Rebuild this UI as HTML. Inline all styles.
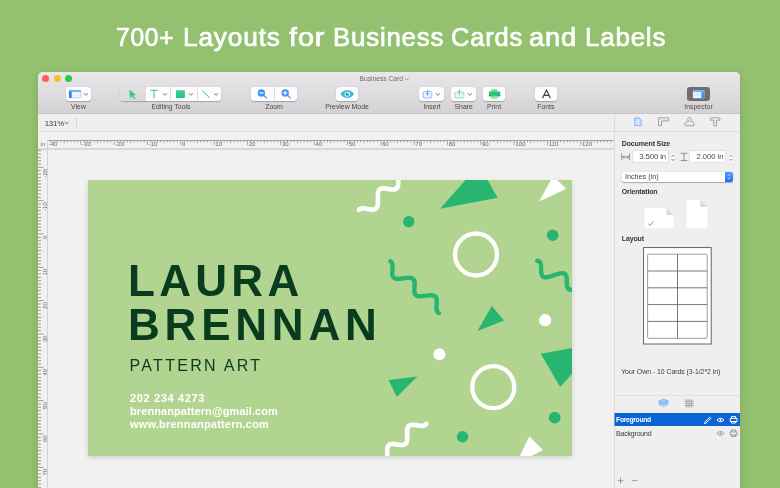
<!DOCTYPE html>
<html><head><meta charset="utf-8">
<style>
*{margin:0;padding:0;box-sizing:border-box}
html,body{width:780px;height:488px;overflow:hidden}
#win,#title{will-change:transform}
body{background:#93c16f;font-family:"Liberation Sans",sans-serif;position:relative}
.a{position:absolute}
#title{left:0;top:21.7px;width:780px;height:30px;color:#fff;font-size:25px;font-weight:normal;-webkit-text-stroke:0.7px #fff;letter-spacing:0.8px;line-height:30px}
.tw{position:absolute;top:0;white-space:nowrap;transform-origin:0 0}
#win{left:38px;top:72px;width:702px;height:430px;background:#f1f1f1;border-radius:5px 5px 0 0;overflow:hidden;box-shadow:0 0 0.5px rgba(0,0,0,0.3),0 2px 10px rgba(0,0,0,0.13)}
#tb{left:0;top:0;width:702px;height:42px;background:linear-gradient(#e9e7e9,#d4d2d4);border-bottom:1px solid #c8c6c8}
.lab{font-size:6.9px;color:#4a4a4a;text-align:center;white-space:nowrap}
.btn{background:#fdfdfd;border-radius:3px;box-shadow:0 0.5px 1px rgba(0,0,0,0.25)}
.ib{font-size:7px;font-weight:bold;color:#333;white-space:nowrap;letter-spacing:-0.15px}
.fld{height:10.9px;background:#fff;box-shadow:0 0 0 0.5px #d6d6d6;font-size:7.8px;color:#4a4a4a;text-align:right;padding-right:2px;line-height:12.8px;letter-spacing:-0.1px}
.tl{width:7px;height:7px;border-radius:50%}
</style></head><body>
<div id="title" class="a"><span class="tw" style="left:116.0px;transform:scaleX(0.980)">700+</span><span class="tw" style="left:183.3px;transform:scaleX(1.049)">Layouts</span><span class="tw" style="left:288.5px;transform:scaleX(1.149)">for</span><span class="tw" style="left:333.2px;transform:scaleX(1.031)">Business</span><span class="tw" style="left:450.9px;transform:scaleX(1.018)">Cards</span><span class="tw" style="left:529.0px;transform:scaleX(1.091)">and</span><span class="tw" style="left:584.8px;transform:scaleX(1.035)">Labels</span></div>
<div id="win" class="a">
  <div id="tb" class="a">
    <div class="a tl" style="left:4.1px;top:3.2px;background:#fc5b57"></div>
    <div class="a tl" style="left:15.5px;top:3.2px;background:#fdbc2e"></div>
    <div class="a tl" style="left:27px;top:3.2px;background:#29c940"></div>
    <div class="a lab" style="left:321.5px;top:3.2px;color:#6a6a6a;font-size:6.7px;text-align:left">Business Card</div><svg class="a" style="left:366px;top:4px" width="6" height="6" viewBox="0 0 6 6"><path d="M0.9,2 L3,3.9 L5.1,2" fill="none" stroke="#8a8a8a" stroke-width="0.7"/></svg>
    <!-- View -->
    <div class="a btn" style="left:28px;top:15px;width:25px;height:14px">
      <svg class="a" style="left:0;top:0" width="25" height="14" viewBox="0 0 25 14">
        <rect x="3.3" y="3.3" width="11.6" height="7.5" rx="1" fill="#eef5fe" stroke="#9cc6fa" stroke-width="0.7"/>
        <rect x="3" y="3" width="12.1" height="1.9" rx="0.8" fill="#79b3f7"/>
        <rect x="3" y="4.6" width="2.7" height="6.3" rx="0.6" fill="#2a87f4"/>
        <path d="M17.8,6.3 L19.9,8.2 L22,6.3" fill="none" stroke="#606060" stroke-width="0.85"/>
      </svg>
    </div>
    <div class="a lab" style="left:20px;top:31px;width:41px">View</div>
    <!-- Editing tools -->
    <div class="a btn" style="left:82px;top:15px;width:101px;height:14px">
      <div class="a" style="left:0;top:0;width:25px;height:14px;background:linear-gradient(#e3e2e3,#dbdadb);border-radius:3px 0 0 3px"></div>
      <div class="a" style="left:25px;top:0;width:0.5px;height:14px;background:#dcdcdc"></div>
      <div class="a" style="left:50.3px;top:0;width:0.5px;height:14px;background:#dcdcdc"></div>
      <div class="a" style="left:76.5px;top:0;width:0.5px;height:14px;background:#dcdcdc"></div>
      <svg class="a" style="left:0;top:0" width="101" height="14" viewBox="0 0 101 14">
        <path d="M9.3,2.8 L16,8.1 L13.2,8.5 L15.5,11.4 L14.2,12.3 L12,9.3 L10.1,11.4 Z" fill="#33c77f"/>
        <path d="M30.3,3.2 H37.7 M34,3.2 V11.3" fill="none" stroke="#33c97f" stroke-width="1.05"/>
        <path d="M42.8,6.3 L44.9,8.2 L47,6.3" fill="none" stroke="#606060" stroke-width="0.85"/>
        <defs><linearGradient id="sq" x1="0" y1="0" x2="0" y2="1"><stop offset="0" stop-color="#45d083"/><stop offset="1" stop-color="#1fbf96"/></linearGradient></defs><rect x="56" y="3.3" width="8.9" height="7.7" rx="0.5" fill="url(#sq)"/>
        <path d="M68.8,6.3 L70.9,8.2 L73,6.3" fill="none" stroke="#606060" stroke-width="0.85"/>
        <path d="M82.3,3.6 L89.5,10.8" fill="none" stroke="#2cc17c" stroke-width="1"/>
        <path d="M94,6.3 L96.1,8.2 L98.2,6.3" fill="none" stroke="#606060" stroke-width="0.85"/>
      </svg>
    </div>
    <div class="a lab" style="left:93px;top:31px;width:80px">Editing Tools</div>
    <!-- Zoom -->
    <div class="a btn" style="left:212.8px;top:15px;width:46.2px;height:14px">
      <div class="a" style="left:23.4px;top:0;width:0.5px;height:14px;background:#dcdcdc"></div>
      <svg class="a" style="left:0;top:0" width="46" height="14" viewBox="0 0 46 14">
        <circle cx="10.4" cy="5.9" r="3.7" fill="#3b93f6"/>
        <path d="M8.4,5.9 H12.4" stroke="#fff" stroke-width="1.1"/>
        <path d="M13,8.5 L15.6,11.1" stroke="#3b93f6" stroke-width="1.1" stroke-linecap="round"/>
        <circle cx="34.2" cy="5.9" r="3.7" fill="#3b93f6"/>
        <path d="M32.2,5.9 H36.2 M34.2,3.9 V7.9" stroke="#fff" stroke-width="1.1"/>
        <path d="M36.8,8.5 L39.4,11.1" stroke="#3b93f6" stroke-width="1.1" stroke-linecap="round"/>
      </svg>
    </div>
    <div class="a lab" style="left:206px;top:31px;width:60px">Zoom</div>
    <!-- Preview -->
    <div class="a btn" style="left:297.8px;top:15px;width:22.5px;height:14px">
      <svg class="a" style="left:0;top:0" width="23" height="14" viewBox="0 0 23 14">
        <path d="M4.6,7.1 C7.5,1.8 15,1.8 17.9,7.1 C15,12.4 7.5,12.4 4.6,7.1 Z" fill="#3cb5ee"/>
        <circle cx="11.25" cy="7.1" r="2.7" fill="#fff"/>
        <circle cx="11.25" cy="7.1" r="1.9" fill="#22b46c"/>
        <circle cx="12" cy="6.3" r="0.7" fill="#e8fff2"/>
      </svg>
    </div>
    <div class="a lab" style="left:279px;top:31px;width:60px">Preview Mode</div>
    <!-- Insert -->
    <div class="a btn" style="left:381.2px;top:15px;width:25.3px;height:14px">
      <svg class="a" style="left:0;top:0" width="26" height="14" viewBox="0 0 26 14">
        <rect x="4.3" y="4.6" width="8.5" height="6.4" rx="1" fill="#eaf3fe" stroke="#6fb0f8" stroke-width="0.75"/>
        <path d="M8.55,2.8 V7" stroke="#3d93f5" stroke-width="0.7"/>
        <path d="M6.9,6.6 H10.2 L8.55,8.6 Z" fill="#3d93f5"/>
        <path d="M16.6,6.3 L18.7,8.2 L20.8,6.3" fill="none" stroke="#606060" stroke-width="0.85"/>
      </svg>
    </div>
    <div class="a lab" style="left:364px;top:31px;width:60px">Insert</div>
    <!-- Share -->
    <div class="a btn" style="left:413px;top:15px;width:25px;height:14px">
      <svg class="a" style="left:0;top:0" width="25" height="14" viewBox="0 0 25 14">
        <rect x="3.9" y="5.3" width="9" height="5.8" rx="1.2" fill="#e6f8ed" stroke="#7ad6a2" stroke-width="0.75"/>
        <path d="M8.4,4.2 V8.3" stroke="#5ccb8c" stroke-width="0.7"/>
        <circle cx="8.4" cy="3.9" r="0.9" fill="#3fc27a"/>
        <path d="M16.6,6.3 L18.7,8.2 L20.8,6.3" fill="none" stroke="#606060" stroke-width="0.85"/>
      </svg>
    </div>
    <div class="a lab" style="left:395.7px;top:31px;width:60px">Share</div>
    <!-- Print -->
    <div class="a btn" style="left:444.8px;top:15px;width:22.2px;height:14px">
      <svg class="a" style="left:0;top:0" width="23" height="14" viewBox="0 0 23 14">
        <rect x="8.2" y="2.2" width="6.1" height="2.6" rx="0.5" fill="#6fe08f"/>
        <rect x="5.9" y="4.5" width="11.3" height="4.8" rx="1.1" fill="#2cc079"/>
        <rect x="5.9" y="8" width="11.3" height="1.3" fill="#1a9e74"/>
        <rect x="8.2" y="8.6" width="6.3" height="3.2" rx="0.4" fill="#7ee89b"/>
      </svg>
    </div>
    <div class="a lab" style="left:426px;top:31px;width:60px">Print</div>
    <!-- Fonts -->
    <div class="a btn" style="left:496.7px;top:15px;width:22.6px;height:14px">
      <svg class="a" style="left:0;top:0" width="23" height="14" viewBox="0 0 23 14">
        <path d="M7.5,11.3 L11.45,3 L15.4,11.3 M8.9,8.4 H14" fill="none" stroke="#3a3a3a" stroke-width="1.1"/>
      </svg>
    </div>
    <div class="a lab" style="left:477.8px;top:31px;width:60px">Fonts</div>
    <!-- Inspector -->
    <div class="a" style="left:648.7px;top:15px;width:23.4px;height:14.4px;background:#6e6e6e;border-radius:3px">
      <svg class="a" style="left:0;top:0" width="24" height="15" viewBox="0 0 24 15">
        <rect x="5.9" y="2.9" width="11.4" height="8.4" rx="1" fill="#eef5fe"/>
        <rect x="14.2" y="2.9" width="3.1" height="8.4" rx="0.6" fill="#3f95f6"/>
        <rect x="5.9" y="2.9" width="11.4" height="2" rx="0.8" fill="#72b2f8"/>
        <rect x="6.8" y="6" width="6.6" height="2.8" fill="#dde9f8"/>
      </svg>
    </div>
    <div class="a lab" style="left:630.5px;top:31px;width:60px">Inspector</div>
  </div>

  <!-- zoom bar -->
  <div class="a" style="left:0;top:42px;width:576px;height:17.5px;background:#efeff0;border-bottom:1px solid #dddddd"></div>
  <div class="a" style="left:6.7px;top:46.6px;font-size:7.8px;color:#3c3c3c;letter-spacing:-0.15px">131%</div><svg class="a" style="left:25.5px;top:49px" width="5" height="4" viewBox="0 0 5 4"><path d="M0.6,1 L2.5,2.8 L4.4,1" fill="none" stroke="#444" stroke-width="0.85"/></svg>
  <div class="a" style="left:38px;top:45.5px;width:0.8px;height:11px;background:#d9d9d9"></div>
  <!-- ruler -->
  <div class="a" style="left:0;top:76.1px;width:576px;height:1.6px;background:#d8d8d8"></div><div class="a" style="left:9.5px;top:67.8px;width:566.5px;height:0.8px;background:#a5a5a5"></div>
  <div class="a" style="left:9.2px;top:68px;width:0.8px;height:362px;background:#d3d3d3"></div>
  <div class="a" style="left:2.6px;top:69.3px;font-size:6px;color:#777">in</div>
  <svg class="a" style="left:0;top:68px" width="576" height="9" viewBox="0 0 576 9"><g fill="#8c8c8c"><rect x="12.46" y="0" width="0.7" height="2.4"/><rect x="15.80" y="0" width="0.7" height="2.4"/><rect x="19.13" y="0" width="0.7" height="2.4"/><rect x="22.46" y="0" width="0.7" height="2.4"/><rect x="25.80" y="0" width="0.7" height="3.2"/><rect x="29.13" y="0" width="0.7" height="2.4"/><rect x="32.46" y="0" width="0.7" height="2.4"/><rect x="35.79" y="0" width="0.7" height="2.4"/><rect x="39.13" y="0" width="0.7" height="2.4"/><rect x="42.46" y="0" width="0.7" height="5.0"/><rect x="45.79" y="0" width="0.7" height="2.4"/><rect x="49.13" y="0" width="0.7" height="2.4"/><rect x="52.46" y="0" width="0.7" height="2.4"/><rect x="55.79" y="0" width="0.7" height="2.4"/><rect x="59.13" y="0" width="0.7" height="3.2"/><rect x="62.46" y="0" width="0.7" height="2.4"/><rect x="65.79" y="0" width="0.7" height="2.4"/><rect x="69.12" y="0" width="0.7" height="2.4"/><rect x="72.46" y="0" width="0.7" height="2.4"/><rect x="75.79" y="0" width="0.7" height="5.0"/><rect x="79.12" y="0" width="0.7" height="2.4"/><rect x="82.46" y="0" width="0.7" height="2.4"/><rect x="85.79" y="0" width="0.7" height="2.4"/><rect x="89.12" y="0" width="0.7" height="2.4"/><rect x="92.46" y="0" width="0.7" height="3.2"/><rect x="95.79" y="0" width="0.7" height="2.4"/><rect x="99.12" y="0" width="0.7" height="2.4"/><rect x="102.45" y="0" width="0.7" height="2.4"/><rect x="105.79" y="0" width="0.7" height="2.4"/><rect x="109.12" y="0" width="0.7" height="5.0"/><rect x="112.45" y="0" width="0.7" height="2.4"/><rect x="115.79" y="0" width="0.7" height="2.4"/><rect x="119.12" y="0" width="0.7" height="2.4"/><rect x="122.45" y="0" width="0.7" height="2.4"/><rect x="125.79" y="0" width="0.7" height="3.2"/><rect x="129.12" y="0" width="0.7" height="2.4"/><rect x="132.45" y="0" width="0.7" height="2.4"/><rect x="135.78" y="0" width="0.7" height="2.4"/><rect x="139.12" y="0" width="0.7" height="2.4"/><rect x="142.45" y="0" width="0.7" height="5.0"/><rect x="145.78" y="0" width="0.7" height="2.4"/><rect x="149.12" y="0" width="0.7" height="2.4"/><rect x="152.45" y="0" width="0.7" height="2.4"/><rect x="155.78" y="0" width="0.7" height="2.4"/><rect x="159.12" y="0" width="0.7" height="3.2"/><rect x="162.45" y="0" width="0.7" height="2.4"/><rect x="165.78" y="0" width="0.7" height="2.4"/><rect x="169.11" y="0" width="0.7" height="2.4"/><rect x="172.45" y="0" width="0.7" height="2.4"/><rect x="175.78" y="0" width="0.7" height="5.0"/><rect x="179.11" y="0" width="0.7" height="2.4"/><rect x="182.45" y="0" width="0.7" height="2.4"/><rect x="185.78" y="0" width="0.7" height="2.4"/><rect x="189.11" y="0" width="0.7" height="2.4"/><rect x="192.45" y="0" width="0.7" height="3.2"/><rect x="195.78" y="0" width="0.7" height="2.4"/><rect x="199.11" y="0" width="0.7" height="2.4"/><rect x="202.44" y="0" width="0.7" height="2.4"/><rect x="205.78" y="0" width="0.7" height="2.4"/><rect x="209.11" y="0" width="0.7" height="5.0"/><rect x="212.44" y="0" width="0.7" height="2.4"/><rect x="215.78" y="0" width="0.7" height="2.4"/><rect x="219.11" y="0" width="0.7" height="2.4"/><rect x="222.44" y="0" width="0.7" height="2.4"/><rect x="225.78" y="0" width="0.7" height="3.2"/><rect x="229.11" y="0" width="0.7" height="2.4"/><rect x="232.44" y="0" width="0.7" height="2.4"/><rect x="235.77" y="0" width="0.7" height="2.4"/><rect x="239.11" y="0" width="0.7" height="2.4"/><rect x="242.44" y="0" width="0.7" height="5.0"/><rect x="245.77" y="0" width="0.7" height="2.4"/><rect x="249.11" y="0" width="0.7" height="2.4"/><rect x="252.44" y="0" width="0.7" height="2.4"/><rect x="255.77" y="0" width="0.7" height="2.4"/><rect x="259.11" y="0" width="0.7" height="3.2"/><rect x="262.44" y="0" width="0.7" height="2.4"/><rect x="265.77" y="0" width="0.7" height="2.4"/><rect x="269.10" y="0" width="0.7" height="2.4"/><rect x="272.44" y="0" width="0.7" height="2.4"/><rect x="275.77" y="0" width="0.7" height="5.0"/><rect x="279.10" y="0" width="0.7" height="2.4"/><rect x="282.44" y="0" width="0.7" height="2.4"/><rect x="285.77" y="0" width="0.7" height="2.4"/><rect x="289.10" y="0" width="0.7" height="2.4"/><rect x="292.44" y="0" width="0.7" height="3.2"/><rect x="295.77" y="0" width="0.7" height="2.4"/><rect x="299.10" y="0" width="0.7" height="2.4"/><rect x="302.43" y="0" width="0.7" height="2.4"/><rect x="305.77" y="0" width="0.7" height="2.4"/><rect x="309.10" y="0" width="0.7" height="5.0"/><rect x="312.43" y="0" width="0.7" height="2.4"/><rect x="315.77" y="0" width="0.7" height="2.4"/><rect x="319.10" y="0" width="0.7" height="2.4"/><rect x="322.43" y="0" width="0.7" height="2.4"/><rect x="325.76" y="0" width="0.7" height="3.2"/><rect x="329.10" y="0" width="0.7" height="2.4"/><rect x="332.43" y="0" width="0.7" height="2.4"/><rect x="335.76" y="0" width="0.7" height="2.4"/><rect x="339.10" y="0" width="0.7" height="2.4"/><rect x="342.43" y="0" width="0.7" height="5.0"/><rect x="345.76" y="0" width="0.7" height="2.4"/><rect x="349.10" y="0" width="0.7" height="2.4"/><rect x="352.43" y="0" width="0.7" height="2.4"/><rect x="355.76" y="0" width="0.7" height="2.4"/><rect x="359.10" y="0" width="0.7" height="3.2"/><rect x="362.43" y="0" width="0.7" height="2.4"/><rect x="365.76" y="0" width="0.7" height="2.4"/><rect x="369.09" y="0" width="0.7" height="2.4"/><rect x="372.43" y="0" width="0.7" height="2.4"/><rect x="375.76" y="0" width="0.7" height="5.0"/><rect x="379.09" y="0" width="0.7" height="2.4"/><rect x="382.43" y="0" width="0.7" height="2.4"/><rect x="385.76" y="0" width="0.7" height="2.4"/><rect x="389.09" y="0" width="0.7" height="2.4"/><rect x="392.43" y="0" width="0.7" height="3.2"/><rect x="395.76" y="0" width="0.7" height="2.4"/><rect x="399.09" y="0" width="0.7" height="2.4"/><rect x="402.42" y="0" width="0.7" height="2.4"/><rect x="405.76" y="0" width="0.7" height="2.4"/><rect x="409.09" y="0" width="0.7" height="5.0"/><rect x="412.42" y="0" width="0.7" height="2.4"/><rect x="415.76" y="0" width="0.7" height="2.4"/><rect x="419.09" y="0" width="0.7" height="2.4"/><rect x="422.42" y="0" width="0.7" height="2.4"/><rect x="425.75" y="0" width="0.7" height="3.2"/><rect x="429.09" y="0" width="0.7" height="2.4"/><rect x="432.42" y="0" width="0.7" height="2.4"/><rect x="435.75" y="0" width="0.7" height="2.4"/><rect x="439.09" y="0" width="0.7" height="2.4"/><rect x="442.42" y="0" width="0.7" height="5.0"/><rect x="445.75" y="0" width="0.7" height="2.4"/><rect x="449.09" y="0" width="0.7" height="2.4"/><rect x="452.42" y="0" width="0.7" height="2.4"/><rect x="455.75" y="0" width="0.7" height="2.4"/><rect x="459.08" y="0" width="0.7" height="3.2"/><rect x="462.42" y="0" width="0.7" height="2.4"/><rect x="465.75" y="0" width="0.7" height="2.4"/><rect x="469.08" y="0" width="0.7" height="2.4"/><rect x="472.42" y="0" width="0.7" height="2.4"/><rect x="475.75" y="0" width="0.7" height="5.0"/><rect x="479.08" y="0" width="0.7" height="2.4"/><rect x="482.42" y="0" width="0.7" height="2.4"/><rect x="485.75" y="0" width="0.7" height="2.4"/><rect x="489.08" y="0" width="0.7" height="2.4"/><rect x="492.42" y="0" width="0.7" height="3.2"/><rect x="495.75" y="0" width="0.7" height="2.4"/><rect x="499.08" y="0" width="0.7" height="2.4"/><rect x="502.41" y="0" width="0.7" height="2.4"/><rect x="505.75" y="0" width="0.7" height="2.4"/><rect x="509.08" y="0" width="0.7" height="5.0"/><rect x="512.41" y="0" width="0.7" height="2.4"/><rect x="515.75" y="0" width="0.7" height="2.4"/><rect x="519.08" y="0" width="0.7" height="2.4"/><rect x="522.41" y="0" width="0.7" height="2.4"/><rect x="525.75" y="0" width="0.7" height="3.2"/><rect x="529.08" y="0" width="0.7" height="2.4"/><rect x="532.41" y="0" width="0.7" height="2.4"/><rect x="535.74" y="0" width="0.7" height="2.4"/><rect x="539.08" y="0" width="0.7" height="2.4"/><rect x="542.41" y="0" width="0.7" height="5.0"/><rect x="545.74" y="0" width="0.7" height="2.4"/><rect x="549.08" y="0" width="0.7" height="2.4"/><rect x="552.41" y="0" width="0.7" height="2.4"/><rect x="555.74" y="0" width="0.7" height="2.4"/><rect x="559.07" y="0" width="0.7" height="3.2"/><rect x="562.41" y="0" width="0.7" height="2.4"/><rect x="565.74" y="0" width="0.7" height="2.4"/><rect x="569.07" y="0" width="0.7" height="2.4"/><rect x="572.41" y="0" width="0.7" height="2.4"/></g><g font-size="6.1" fill="#6a6a6a" font-family="Liberation Sans"><text x="10.7" y="6.3">-40</text><text x="44.01" y="6.3">-30</text><text x="77.34" y="6.3">-20</text><text x="110.67" y="6.3">-10</text><text x="144.00" y="6.3">0</text><text x="177.33" y="6.3">10</text><text x="210.66" y="6.3">20</text><text x="243.99" y="6.3">30</text><text x="277.32" y="6.3">40</text><text x="310.65" y="6.3">50</text><text x="343.98" y="6.3">60</text><text x="377.31" y="6.3">70</text><text x="410.64" y="6.3">80</text><text x="443.97" y="6.3">90</text><text x="477.30" y="6.3">100</text><text x="510.63" y="6.3">110</text><text x="543.96" y="6.3">120</text></g></svg>
  <svg class="a" style="left:0;top:77px" width="10" height="353" viewBox="0 77 10 353"><g fill="#8c8c8c"><rect x="0" y="78.27" width="3.5" height="0.8"/><rect x="0" y="81.61" width="3.0" height="0.8"/><rect x="0" y="84.94" width="3.0" height="0.8"/><rect x="0" y="88.27" width="3.0" height="0.8"/><rect x="0" y="91.61" width="3.0" height="0.8"/><rect x="0" y="94.94" width="5.5" height="0.8"/><rect x="0" y="98.27" width="3.0" height="0.8"/><rect x="0" y="101.61" width="3.0" height="0.8"/><rect x="0" y="104.94" width="3.0" height="0.8"/><rect x="0" y="108.27" width="3.0" height="0.8"/><rect x="0" y="111.60" width="3.5" height="0.8"/><rect x="0" y="114.94" width="3.0" height="0.8"/><rect x="0" y="118.27" width="3.0" height="0.8"/><rect x="0" y="121.60" width="3.0" height="0.8"/><rect x="0" y="124.94" width="3.0" height="0.8"/><rect x="0" y="128.27" width="5.5" height="0.8"/><rect x="0" y="131.60" width="3.0" height="0.8"/><rect x="0" y="134.94" width="3.0" height="0.8"/><rect x="0" y="138.27" width="3.0" height="0.8"/><rect x="0" y="141.60" width="3.0" height="0.8"/><rect x="0" y="144.94" width="3.5" height="0.8"/><rect x="0" y="148.27" width="3.0" height="0.8"/><rect x="0" y="151.60" width="3.0" height="0.8"/><rect x="0" y="154.93" width="3.0" height="0.8"/><rect x="0" y="158.27" width="3.0" height="0.8"/><rect x="0" y="161.60" width="5.5" height="0.8"/><rect x="0" y="164.93" width="3.0" height="0.8"/><rect x="0" y="168.27" width="3.0" height="0.8"/><rect x="0" y="171.60" width="3.0" height="0.8"/><rect x="0" y="174.93" width="3.0" height="0.8"/><rect x="0" y="178.26" width="3.5" height="0.8"/><rect x="0" y="181.60" width="3.0" height="0.8"/><rect x="0" y="184.93" width="3.0" height="0.8"/><rect x="0" y="188.26" width="3.0" height="0.8"/><rect x="0" y="191.60" width="3.0" height="0.8"/><rect x="0" y="194.93" width="5.5" height="0.8"/><rect x="0" y="198.26" width="3.0" height="0.8"/><rect x="0" y="201.60" width="3.0" height="0.8"/><rect x="0" y="204.93" width="3.0" height="0.8"/><rect x="0" y="208.26" width="3.0" height="0.8"/><rect x="0" y="211.59" width="3.5" height="0.8"/><rect x="0" y="214.93" width="3.0" height="0.8"/><rect x="0" y="218.26" width="3.0" height="0.8"/><rect x="0" y="221.59" width="3.0" height="0.8"/><rect x="0" y="224.93" width="3.0" height="0.8"/><rect x="0" y="228.26" width="5.5" height="0.8"/><rect x="0" y="231.59" width="3.0" height="0.8"/><rect x="0" y="234.93" width="3.0" height="0.8"/><rect x="0" y="238.26" width="3.0" height="0.8"/><rect x="0" y="241.59" width="3.0" height="0.8"/><rect x="0" y="244.92" width="3.5" height="0.8"/><rect x="0" y="248.26" width="3.0" height="0.8"/><rect x="0" y="251.59" width="3.0" height="0.8"/><rect x="0" y="254.92" width="3.0" height="0.8"/><rect x="0" y="258.26" width="3.0" height="0.8"/><rect x="0" y="261.59" width="5.5" height="0.8"/><rect x="0" y="264.92" width="3.0" height="0.8"/><rect x="0" y="268.26" width="3.0" height="0.8"/><rect x="0" y="271.59" width="3.0" height="0.8"/><rect x="0" y="274.92" width="3.0" height="0.8"/><rect x="0" y="278.25" width="3.5" height="0.8"/><rect x="0" y="281.59" width="3.0" height="0.8"/><rect x="0" y="284.92" width="3.0" height="0.8"/><rect x="0" y="288.25" width="3.0" height="0.8"/><rect x="0" y="291.59" width="3.0" height="0.8"/><rect x="0" y="294.92" width="5.5" height="0.8"/><rect x="0" y="298.25" width="3.0" height="0.8"/><rect x="0" y="301.59" width="3.0" height="0.8"/><rect x="0" y="304.92" width="3.0" height="0.8"/><rect x="0" y="308.25" width="3.0" height="0.8"/><rect x="0" y="311.59" width="3.5" height="0.8"/><rect x="0" y="314.92" width="3.0" height="0.8"/><rect x="0" y="318.25" width="3.0" height="0.8"/><rect x="0" y="321.58" width="3.0" height="0.8"/><rect x="0" y="324.92" width="3.0" height="0.8"/><rect x="0" y="328.25" width="5.5" height="0.8"/><rect x="0" y="331.58" width="3.0" height="0.8"/><rect x="0" y="334.92" width="3.0" height="0.8"/><rect x="0" y="338.25" width="3.0" height="0.8"/><rect x="0" y="341.58" width="3.0" height="0.8"/><rect x="0" y="344.92" width="3.5" height="0.8"/><rect x="0" y="348.25" width="3.0" height="0.8"/><rect x="0" y="351.58" width="3.0" height="0.8"/><rect x="0" y="354.91" width="3.0" height="0.8"/><rect x="0" y="358.25" width="3.0" height="0.8"/><rect x="0" y="361.58" width="5.5" height="0.8"/><rect x="0" y="364.91" width="3.0" height="0.8"/><rect x="0" y="368.25" width="3.0" height="0.8"/><rect x="0" y="371.58" width="3.0" height="0.8"/><rect x="0" y="374.91" width="3.0" height="0.8"/><rect x="0" y="378.25" width="3.5" height="0.8"/><rect x="0" y="381.58" width="3.0" height="0.8"/><rect x="0" y="384.91" width="3.0" height="0.8"/><rect x="0" y="388.24" width="3.0" height="0.8"/><rect x="0" y="391.58" width="3.0" height="0.8"/><rect x="0" y="394.91" width="5.5" height="0.8"/><rect x="0" y="398.24" width="3.0" height="0.8"/><rect x="0" y="401.58" width="3.0" height="0.8"/><rect x="0" y="404.91" width="3.0" height="0.8"/><rect x="0" y="408.24" width="3.0" height="0.8"/><rect x="0" y="411.58" width="3.5" height="0.8"/><rect x="0" y="414.91" width="3.0" height="0.8"/><rect x="0" y="418.24" width="3.0" height="0.8"/></g><g font-size="6.1" fill="#6a6a6a" font-family="Liberation Sans"><text transform="translate(8.6,96.84) rotate(-90)" text-anchor="end">-20</text><text transform="translate(8.6,130.17) rotate(-90)" text-anchor="end">-10</text><text transform="translate(8.6,163.50) rotate(-90)" text-anchor="end">0</text><text transform="translate(8.6,196.83) rotate(-90)" text-anchor="end">10</text><text transform="translate(8.6,230.16) rotate(-90)" text-anchor="end">20</text><text transform="translate(8.6,263.49) rotate(-90)" text-anchor="end">30</text><text transform="translate(8.6,296.82) rotate(-90)" text-anchor="end">40</text><text transform="translate(8.6,330.15) rotate(-90)" text-anchor="end">50</text><text transform="translate(8.6,363.48) rotate(-90)" text-anchor="end">60</text><text transform="translate(8.6,396.81) rotate(-90)" text-anchor="end">70</text></g></svg>

  <!-- card -->
  <div class="a" style="left:50px;top:108px;width:484px;height:276px;background:#b1d590;overflow:hidden;box-shadow:0 1.5px 5px rgba(0,0,0,0.14)">
    <svg class="a" style="left:0;top:0" width="484" height="276" viewBox="88 180 484 276">
      <g fill="none" stroke-linecap="round" stroke-linejoin="round" stroke-width="4.4">
        <path d="M358.91,209.85 L359.23,209.50 L359.59,209.20 L359.98,208.95 L360.41,208.75 L360.87,208.59 L361.36,208.47 L361.89,208.39 L362.44,208.35 L363.02,208.35 L363.62,208.37 L364.25,208.42 L364.89,208.50 L365.54,208.60 L366.21,208.71 L366.89,208.83 L367.56,208.95 L368.24,209.08 L368.92,209.20 L369.59,209.31 L370.25,209.41 L370.89,209.49 L371.52,209.55 L372.13,209.58 L372.71,209.58 L373.27,209.55 L373.80,209.48 L374.30,209.37 L374.77,209.22 L375.20,209.02 L375.60,208.78 L375.97,208.50 L376.30,208.16 L376.59,207.78 L376.85,207.35 L377.08,206.88 L377.27,206.37 L377.43,205.81 L377.57,205.21 L377.67,204.58 L377.75,203.92 L377.80,203.22 L377.84,202.50 L377.86,201.76 L377.87,201.00 L377.87,200.23 L377.86,199.45 L377.85,198.67 L377.84,197.89 L377.84,197.11 L377.84,196.35 L377.86,195.60 L377.89,194.87 L377.94,194.17 L378.01,193.50 L378.11,192.85 L378.23,192.25 L378.39,191.68 L378.57,191.15 L378.79,190.67 L379.04,190.23 L379.32,189.83 L379.64,189.49 L380.00,189.18 L380.39,188.93 L380.81,188.72 L381.27,188.56 L381.76,188.44 L382.28,188.35 L382.83,188.31 L383.41,188.30 L384.01,188.33 L384.63,188.38 L385.27,188.45 L385.93,188.55 L386.60,188.66 L387.27,188.77 L387.95,188.90 L388.63,189.03 L389.30,189.15 L389.97,189.26 L390.63,189.36 L391.28,189.45 L391.91,189.51 L392.52,189.54 L393.10,189.54 L393.66,189.51 L394.20,189.45 L394.70,189.34 L395.17,189.19 L395.61,189.00 L396.01,188.76 L396.38,188.48 L396.71,188.15 L397.01,187.77 L397.27,187.35 L397.50,186.88 L397.70,186.37 L397.86,185.81 L397.99,185.22 L398.10,184.59 L398.18,183.93 L398.24,183.24 L398.28,182.52 L398.30,181.78 L398.31,181.02 L398.31,180.25 L398.30,179.47 L398.29,178.69 L398.28,177.91 L398.28,177.13 L398.28,176.37 L398.30,175.62 L398.33,174.89 L398.38,174.18 L398.45,173.51 L398.54,172.86 L398.66,172.25 L398.81,171.68 L398.99,171.15" stroke="#fff" stroke-width="4.6"/>
        <path d="M426.16,423.88 L425.88,424.28 L425.55,424.64 L425.19,424.94 L424.78,425.20 L424.33,425.41 L423.85,425.58 L423.33,425.70 L422.77,425.78 L422.18,425.82 L421.56,425.83 L420.91,425.81 L420.25,425.76 L419.56,425.68 L418.86,425.59 L418.15,425.49 L417.43,425.38 L416.71,425.26 L415.99,425.16 L415.28,425.05 L414.58,424.97 L413.89,424.90 L413.23,424.85 L412.59,424.83 L411.98,424.85 L411.39,424.90 L410.84,424.98 L410.33,425.11 L409.85,425.29 L409.41,425.51 L409.01,425.78 L408.65,426.10 L408.34,426.46 L408.06,426.87 L407.82,427.33 L407.62,427.84 L407.46,428.39 L407.33,428.98 L407.24,429.61 L407.17,430.27 L407.13,430.96 L407.11,431.68 L407.11,432.42 L407.12,433.18 L407.15,433.95 L407.18,434.73 L407.21,435.50 L407.23,436.28 L407.25,437.04 L407.26,437.79 L407.25,438.52 L407.22,439.23 L407.16,439.90 L407.08,440.55 L406.97,441.16 L406.83,441.73 L406.64,442.25 L406.43,442.73 L406.17,443.17 L405.87,443.56 L405.53,443.90 L405.15,444.19 L404.73,444.43 L404.27,444.63 L403.77,444.78 L403.24,444.89 L402.67,444.95 L402.07,444.98 L401.44,444.98 L400.79,444.95 L400.11,444.89 L399.42,444.81 L398.72,444.71 L398.00,444.61 L397.28,444.49 L396.56,444.38 L395.84,444.27 L395.14,444.18 L394.44,444.09 L393.76,444.03 L393.11,444.00 L392.48,443.99 L391.87,444.01 L391.30,444.07 L390.76,444.18 L390.26,444.32 L389.79,444.51 L389.37,444.75 L388.98,445.03 L388.64,445.36 L388.33,445.75 L388.07,446.18 L387.84,446.65 L387.66,447.17 L387.51,447.73 L387.39,448.34 L387.31,448.98 L387.25,449.65 L387.22,450.35 L387.20,451.08 L387.21,451.83 L387.23,452.59 L387.25,453.36 L387.28,454.14 L387.31,454.91 L387.33,455.69 L387.35,456.44 L387.35,457.19 L387.33,457.91 L387.30,458.61 L387.23,459.28 L387.14,459.91 L387.02,460.50 L386.86,461.06 L386.67,461.57 L386.44,462.04 L386.17,462.46 L385.86,462.83 L385.50,463.15 L385.11,463.43" stroke="#fff" stroke-width="4.6"/>
        <path d="M390.41,261.19 L390.91,261.54 L391.34,261.95 L391.70,262.43 L391.99,262.98 L392.21,263.59 L392.37,264.26 L392.48,264.98 L392.53,265.75 L392.55,266.56 L392.53,267.40 L392.49,268.26 L392.43,269.14 L392.36,270.02 L392.30,270.90 L392.26,271.77 L392.23,272.61 L392.24,273.42 L392.30,274.19 L392.39,274.92 L392.55,275.60 L392.77,276.21 L393.05,276.77 L393.40,277.26 L393.82,277.68 L394.31,278.04 L394.88,278.32 L395.52,278.54 L396.22,278.70 L396.99,278.79 L397.81,278.83 L398.69,278.82 L399.61,278.77 L400.57,278.69 L401.55,278.58 L402.56,278.45 L403.57,278.32 L404.58,278.19 L405.58,278.06 L406.55,277.96 L407.50,277.88 L408.41,277.84 L409.28,277.85 L410.09,277.90 L410.84,278.01 L411.53,278.18 L412.15,278.42 L412.70,278.72 L413.18,279.09 L413.58,279.53 L413.92,280.03 L414.18,280.60 L414.38,281.24 L414.52,281.92 L414.61,282.66 L414.65,283.45 L414.65,284.27 L414.62,285.12 L414.57,285.99 L414.51,286.87 L414.44,287.75 L414.39,288.62 L414.35,289.48 L414.34,290.31 L414.36,291.11 L414.43,291.87 L414.55,292.58 L414.72,293.23 L414.96,293.83 L415.27,294.36 L415.64,294.83 L416.09,295.23 L416.61,295.55 L417.20,295.82 L417.86,296.01 L418.59,296.15 L419.38,296.22 L420.23,296.24 L421.12,296.22 L422.05,296.16 L423.02,296.06 L424.01,295.95 L425.02,295.82 L426.03,295.68 L427.04,295.55 L428.03,295.43 L429.00,295.34 L429.94,295.27 L430.83,295.25 L431.68,295.27 L432.47,295.34 L433.20,295.47 L433.87,295.67 L434.46,295.93 L434.98,296.25 L435.43,296.65 L435.81,297.11 L436.12,297.64 L436.36,298.23 L436.54,298.89 L436.66,299.59 L436.73,300.35 L436.76,301.15 L436.75,301.98 L436.71,302.84 L436.65,303.71 L436.59,304.59 L436.53,305.47 L436.48,306.34 L436.45,307.19 L436.45,308.01 L436.48,308.80 L436.57,309.54 L436.71,310.23 L436.90,310.86 L437.17,311.44 L437.50,311.95 L437.90,312.39 L438.37,312.76 L438.92,313.07" stroke="#27b56f"/>
        <path d="M537.27,260.72 L537.79,260.79 L538.27,260.92 L538.71,261.09 L539.11,261.32 L539.46,261.59 L539.77,261.91 L540.05,262.28 L540.29,262.69 L540.49,263.15 L540.65,263.64 L540.79,264.18 L540.89,264.74 L540.97,265.34 L541.03,265.97 L541.07,266.61 L541.09,267.27 L541.10,267.95 L541.11,268.63 L541.12,269.32 L541.13,270.00 L541.14,270.68 L541.16,271.34 L541.20,271.99 L541.26,272.61 L541.34,273.21 L541.44,273.78 L541.58,274.31 L541.74,274.81 L541.94,275.27 L542.17,275.68 L542.45,276.05 L542.76,276.37 L543.11,276.65 L543.51,276.87 L543.95,277.05 L544.43,277.17 L544.94,277.25 L545.50,277.29 L546.10,277.27 L546.73,277.22 L547.40,277.12 L548.10,276.99 L548.83,276.82 L549.58,276.62 L550.35,276.40 L551.14,276.16 L551.95,275.90 L552.77,275.62 L553.59,275.34 L554.41,275.06 L555.23,274.78 L556.05,274.51 L556.85,274.25 L557.64,274.01 L558.41,273.80 L559.16,273.60 L559.88,273.44 L560.58,273.31 L561.24,273.22 L561.87,273.18 L562.46,273.17 L563.01,273.21 L563.52,273.30 L563.99,273.43 L564.42,273.61 L564.81,273.85 L565.16,274.13 L565.47,274.46 L565.73,274.83 L565.96,275.26 L566.16,275.72 L566.31,276.22 L566.44,276.76 L566.54,277.34 L566.62,277.94 L566.67,278.57 L566.71,279.22 L566.73,279.88 L566.74,280.56 L566.75,281.25 L566.75,281.93 L566.76,282.61 L566.78,283.29 L566.80,283.95 L566.85,284.59 L566.91,285.21 L566.99,285.80 L567.10,286.37 L567.24,286.89 L567.41,287.38 L567.62,287.83 L567.86,288.24 L568.14,288.60 L568.46,288.91 L568.82,289.18 L569.23,289.39 L569.67,289.56 L570.16,289.67 L570.68,289.74 L571.25,289.77 L571.85,289.75 L572.49,289.68 L573.17,289.58 L573.87,289.44 L574.60,289.27 L575.36,289.06 L576.14,288.84 L576.93,288.59 L577.74,288.33 L578.56,288.05 L579.38,287.77 L580.21,287.49 L581.03,287.21 L581.84,286.94 L582.64,286.69 L583.43,286.45 L584.19,286.24 L584.94,286.05 L585.65,285.90" stroke="#27b56f"/>
        <circle cx="476" cy="254.5" r="21" stroke="#fff" stroke-width="4.3"/>
        <circle cx="493.3" cy="387.2" r="21" stroke="#fff" stroke-width="4.3"/>
      </g>
      <g fill="#27b56f">
        <polygon points="440,208.7 497.7,197.7 479,165"/>
        <polygon points="491.8,306 504.1,320.4 477.4,331"/>
        <polygon points="540.8,353.7 600,342.7 560.2,387"/>
        <polygon points="388.6,380.1 417.3,376.4 396.8,396.9"/>
        <circle cx="408.8" cy="221.6" r="5.7"/>
        <circle cx="552.7" cy="235.2" r="5.8"/>
        <circle cx="462.5" cy="436.8" r="5.7"/>
        <circle cx="554.7" cy="417.7" r="5.9"/>
      </g>
      <g fill="#fff">
        <polygon points="539.2,201.5 566.2,188.8 553,176"/>
        <polygon points="529.4,436.3 543,450 516,464"/>
        <circle cx="545.1" cy="320.2" r="6.1"/>
        <circle cx="439.5" cy="354.2" r="6"/>
      </g>
    </svg>
    <div class="a" style="left:40px;top:79px;font-size:44px;font-weight:bold;color:#093c1e;line-height:44px;white-space:nowrap"><span style="letter-spacing:4.3px">LAURA</span><br><span style="letter-spacing:4.8px">BRENNAN</span></div>
    <div class="a" style="left:41.5px;top:176.5px;font-size:16px;color:#093c1e;letter-spacing:2.3px;white-space:nowrap">PATTERN ART</div>
    <div class="a" style="left:42px;top:211.5px;font-size:11px;font-weight:bold;color:#fff;line-height:13px;white-space:nowrap"><span style="letter-spacing:0.65px">202 234 4273</span><br><span style="letter-spacing:0.09px">brennanpattern@gmail.com</span><br><span style="letter-spacing:0.2px">www.brennanpattern.com</span></div>
  </div>

  <!-- inspector -->
  <div class="a" style="left:576px;top:42px;width:126px;height:400px;background:#efefef;border-left:1px solid #dcdcdc"></div>
  <div class="a" style="left:577px;top:59px;width:125px;height:1px;background:#dcdcdc"></div>
  <svg class="a" style="left:576px;top:42px" width="126" height="400" viewBox="614 114 126 400">
    <!-- tab icons -->
    <path d="M634.7,117.9 H639 L641.1,120 V125.6 H634.7 Z" fill="#cfe2fc" stroke="#68a8f6" stroke-width="0.8"/>
    <path d="M658.6,117.9 H668.6 V120.9 H661.6 V125.6 H658.6 Z" fill="#f4f4f4" stroke="#8a8a8a" stroke-width="0.8"/>
    <path d="M659.5,119.4 H667.5 M660.1,121.5 V124.8" stroke="#b0b0b0" stroke-width="0.5" stroke-dasharray="0.6 0.6"/>
    <path d="M687.9,118.9 A1.6,1.6 0 0 1 691.1,118.9 V120.6 H690.5 V121.6 H692.2 Q693.9,121.8 693.9,123.5 V125.8 H685.1 V123.5 Q685.1,121.8 686.8,121.6 H688.5 V120.6 H687.9 Z" fill="#f5f5f5" stroke="#888" stroke-width="0.75"/>
    <path d="M685.5,124.1 H693.5" stroke="#9a9a9a" stroke-width="0.6" stroke-dasharray="0.8 0.8"/>
    <path d="M710.4,118.1 Q715.2,117.3 719.9,118.1 V120.4 Q718.5,119.9 716.6,120 V125.8 H713.8 V120 Q711.9,119.9 710.4,120.4 Z" fill="#f5f5f5" stroke="#888" stroke-width="0.75"/>
    <path d="M715.2,120.6 V125.2" stroke="#aaa" stroke-width="0.6" stroke-dasharray="0.7 0.7"/>
    <!-- width/height icons -->
    <path d="M621.8,153.5 V160.3 M629.5,153.5 V160.3 M622.3,157 H629" stroke="#777" stroke-width="0.8" fill="none"/>
    <path d="M624.5,155.8 L622.8,157 L624.5,158.2 M626.8,155.8 L628.5,157 L626.8,158.2" stroke="#777" stroke-width="0.6" fill="none"/>
    <path d="M680.6,153.3 H687.3 M680.6,160.6 H687.3 M684,153.5 V160.4" stroke="#777" stroke-width="0.8" fill="none"/>
    
    <!-- orientation pages -->
    <path d="M644.7,208 H666.5 L673.5,215 V228.2 H644.7 Z" fill="#fff"/>
    <path d="M666.5,208 L673.5,215 H666.5 Z" fill="#d9d9d9"/>
    <path d="M648.2,223.5 L650.2,225.5 L653.6,221.3" fill="none" stroke="#3b8ef5" stroke-width="0.9"/>
    <path d="M686.7,200 H700.4 L707.4,207 V228.2 H686.7 Z" fill="#fff"/>
    <path d="M700.4,200 L707.4,207 H700.4 Z" fill="#d9d9d9"/>
    <!-- layout -->
    <rect x="643.6" y="247.6" width="67.6" height="96.4" fill="#fff" stroke="#555" stroke-width="0.9"/>
    <g fill="none" stroke="#777" stroke-width="0.7">
      <rect x="647.6" y="254.2" width="59.6" height="84.1" rx="1"/>
    </g>
    <g stroke="#555" stroke-width="0.8">
      <path d="M677.5,254.2 V338.3 M647.6,271 H707.2 M647.6,287.8 H707.2 M647.6,304.6 H707.2 M647.6,321.4 H707.2"/>
    </g>
    <!-- layers icons -->
    <g fill="#9fc8fb" stroke="#5aa2f6" stroke-width="0.6">
      <path d="M663.5,400.8 L668.5,403 L663.5,405.2 L658.5,403 Z"/>
      <path d="M658.5,404.5 L663.5,406.7 L668.5,404.5" fill="none"/>
      <path d="M663.5,399 L668.5,401.2 L663.5,403.4 L658.5,401.2 Z"/>
    </g>
    <g stroke="#8a8a8a" stroke-width="0.65">
      <path d="M686.8,399 V407.7 M689.1,399 V407.7 M691.4,399 V407.7 M684.4,401.2 H693.8 M684.4,403.4 H693.8 M684.4,405.6 H693.8"/>
    </g>
    <!-- foreground bar -->
    <rect x="614.5" y="413" width="126" height="13" fill="#0b63d8"/>
    <g fill="none" stroke="#fff" stroke-width="1">
      <path d="M704.8,422.3 L709.8,417.2 L710.9,418.3 L705.9,423.3 L704.5,423.5 Z"/>
      <path d="M716.9,419.9 Q720.5,416.2 724,419.9 Q720.5,423.6 716.9,419.9 Z"/>
      <path d="M731.5,418.3 V416.5 H735.7 V418.3 M730.2,418.4 H737 V421.5 H730.2 Z M731.5,421.2 V423 H735.7 V421.2"/>
    </g>
    <circle cx="720.5" cy="419.9" r="1" fill="#fff"/>
    <g fill="none" stroke="#888" stroke-width="0.8">
      <path d="M716.9,433.4 Q720.5,429.7 724,433.4 Q720.5,437.1 716.9,433.4 Z"/>
      <path d="M731.5,431.8 V430 H735.7 V431.8 M730.2,431.9 H737 V435 H730.2 Z M731.5,434.7 V436.5 H735.7 V434.7"/>
    </g>
    <circle cx="720.5" cy="433.4" r="0.9" fill="#888"/>
    <path d="M617.5,480.7 H623.5 M620.5,477.7 V483.7 M632,480.7 H637.5" stroke="#888" stroke-width="0.8"/>
    <rect x="614.5" y="395" width="126" height="0.8" fill="#dcdcdc"/>
  </svg>
  <div class="a ib" style="left:583.8px;top:67.5px">Document Size</div>
  <div class="a fld" style="left:594.6px;top:79.2px;width:35.5px">3.500 in</div>
  <div class="a fld" style="left:651.9px;top:79.2px;width:35.6px">2.000 in</div>
  <svg class="a" style="left:632.3px;top:80.5px" width="6" height="10" viewBox="0 0 6 10"><rect x="0.3" y="0" width="5.4" height="9.7" rx="2.7" fill="#fff" stroke="#dadada" stroke-width="0.4"/><path d="M1.6,3.6 L3,2.2 L4.4,3.6 M1.6,6.1 L3,7.5 L4.4,6.1" fill="none" stroke="#444" stroke-width="0.75"/></svg>
  <svg class="a" style="left:689.6px;top:80.5px" width="6" height="10" viewBox="0 0 6 10"><rect x="0.3" y="0" width="5.4" height="9.7" rx="2.7" fill="#fff" stroke="#dadada" stroke-width="0.4"/><path d="M1.6,3.6 L3,2.2 L4.4,3.6 M1.6,6.1 L3,7.5 L4.4,6.1" fill="none" stroke="#444" stroke-width="0.75"/></svg>
  <div class="a" style="left:583.8px;top:100.2px;width:111.4px;height:9.4px;background:#fff;border-radius:2px;box-shadow:0 0.5px 1px rgba(0,0,0,0.3);font-size:7.2px;color:#444;line-height:9.6px;padding-left:3.2px">Inches (in)</div>
  <div class="a" style="left:687.1px;top:100.2px;width:8.1px;height:9.4px;background:linear-gradient(#4a9cf7,#1f74ec);border-radius:0 2px 2px 0"></div>
  <svg class="a" style="left:687.1px;top:100.2px" width="8.1" height="9.4" viewBox="0 0 8.1 9.4"><path d="M2.7,3.8 L4.05,2.4 L5.4,3.8 M2.7,5.6 L4.05,7 L5.4,5.6" fill="none" stroke="#fff" stroke-width="0.7"/></svg>
  <div class="a ib" style="left:583.8px;top:116px">Orientation</div>
  <div class="a ib" style="left:583.8px;top:163px">Layout</div>
  <div class="a" style="left:583.2px;top:295.8px;font-size:6.9px;color:#3a3a3a;white-space:nowrap;letter-spacing:-0.03px">Your Own - 10 Cards (3-1/2*2 in)</div>
  <div class="a" style="left:578.1px;top:343.8px;font-size:6.7px;color:#fff;font-weight:bold;white-space:nowrap;letter-spacing:-0.28px">Foreground</div>
  <div class="a" style="left:578.1px;top:358.1px;font-size:7px;color:#3a3a3a;white-space:nowrap;letter-spacing:-0.2px">Background</div>
</div>
</body></html>
